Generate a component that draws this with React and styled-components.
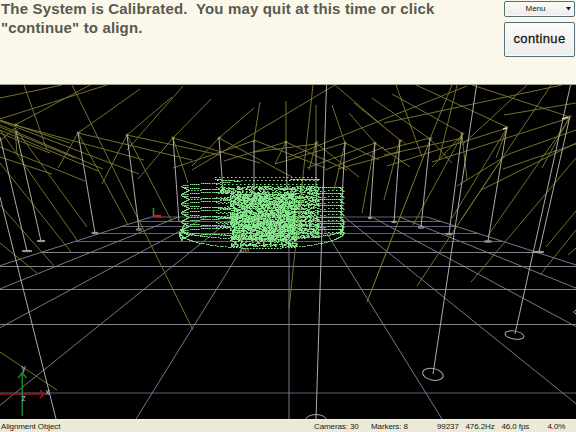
import React from "react";
import styled, { createGlobalStyle } from "styled-components";

const GlobalStyle = createGlobalStyle`
  * { box-sizing: border-box; }
  body { margin: 0; background: #000; font-family: "Liberation Sans", Arial, sans-serif; }
`;

const Window = styled.div`
  display: flex;
  flex-direction: column;
  width: 576px;
  height: 432px;
  overflow: hidden;
`;

const Header = styled.header`
  display: flex;
  justify-content: space-between;
  flex: 0 0 85px;
  background: #fbf8e9;
  border-bottom: 1px solid #a5a499;
`;

const Message = styled.h1`
  margin: -1px 0 0;
  padding-left: 1px;
  font-size: 15px;
  line-height: 19px;
  letter-spacing: 0.16px;
  font-weight: bold;
  color: #595952;
  white-space: pre;
`;

const Actions = styled.div`
  display: flex;
  flex-direction: column;
  gap: 5px;
  width: 72px;
  padding: 1px 1px 0 0;
`;

const Button = styled.button`
  display: flex;
  align-items: center;
  justify-content: center;
  width: 71px;
  height: ${(p) => (p.$large ? 35 : 16)}px;
  padding: ${(p) => (p.$large ? "0 0 2px" : "0")};
  border: 1px solid #54717b;
  border-radius: 2px;
  background: linear-gradient(#fbfbf8, #ececea);
  box-shadow: inset 0 0 0 1px #fafafa;
  color: #181818;
  font-family: inherit;
  font-size: ${(p) => (p.$large ? "13px" : "8px")};
  letter-spacing: ${(p) => (p.$large ? "0.35px" : "0")};
  -webkit-text-stroke: ${(p) => (p.$large ? "0.3px #181818" : "0")};
`;

const MenuLabel = styled.span`
  flex: 1;
  padding: 0 8px 1px 0;
  padding-left: 8px;
  text-align: center;
`;

const Caret = styled.svg`
  width: 5px;
  height: 4px;
  margin-right: 3px;
`;

const Scene = styled.svg`
  display: block;
  flex: 0 0 334px;
  width: 576px;
  background: #000;
`;

const StatusBar = styled.footer`
  display: grid;
  grid-template-columns: 313px 57px 66px 28.5px 36px 46px 1fr;
  align-items: center;
  flex: 0 0 13px;
  height: 13px;
  padding-top: 2px;
  border-top: 1px solid #f7f5ea;
  background: #ece9d8;
  color: #191914;
  font-size: 8px;
  line-height: 10px;
  letter-spacing: -0.1px;
  white-space: nowrap;
`;

const Status = styled.span`
  padding-left: 1px;
`;

const VP = { x: 289, y: 172.5 };
const gridRows = [217, 221.5, 226.5, 233.5, 241.5, 252.5, 266.5, 289.5, 324.5, 393];
const columns = [-5, -4, -3, -2, -1, 0, 1, 2, 3, 4, 5];
const columnX = (k, y) => VP.x + (k * 153 * (y - VP.y)) / 246.5;

// Camera sight lines: x1, y1, x2, y2
const rays = [
  [0, 98, 62, 85], [0, 119, 110, 84], [15, 125, 92, 84], [24, 85, 47, 150],
  [72, 85, 193, 330], [78, 133, 140, 89], [78, 133, 58, 168], [127, 135, 172, 97],
  [127, 150, 183, 86], [127, 135, 102, 184], [127, 135, 172, 222], [127, 135, 192, 149],
  [192, 149, 220, 155], [78, 133, 192, 160], [173, 138, 211, 99], [173, 138, 138, 179],
  [173, 138, 188, 183], [173, 138, 260, 163], [192, 170, 335, 85], [173, 168, 253, 141],
  [0, 120, 70, 143], [0, 121, 144, 160], [0, 121, 139, 174], [0, 125, 103, 169],
  [0, 130, 98, 171], [0, 133, 50, 153], [0, 127, 75, 158], [0, 147, 85, 181],
  [0, 157, 52, 174], [78, 133, 128, 225], [15, 128, 87, 227], [0, 130, 77, 240],
  [0, 163, 71, 252], [0, 205, 55, 267], [0, 243, 37, 273], [0, 352, 57, 390],
  [15, 128, 17, 154], [15, 128, 0, 141],
  [219, 138, 254, 108], [219, 138, 292, 177], [219, 138, 192, 166], [254, 140, 260, 102],
  [254, 140, 325, 168], [224, 161, 286, 142], [286, 142, 286, 101], [286, 142, 275, 164],
  [286, 142, 347, 170], [286, 158, 325, 143], [254, 152, 316, 144], [316, 143, 309, 170],
  [313, 85, 305, 157], [305, 157, 299, 213], [299, 213, 289, 309],
  [332, 105, 345, 143], [345, 143, 334, 190], [345, 143, 379, 160], [316, 143, 316, 105],
  [349, 113, 375, 143], [375, 143, 362, 213], [335, 85, 384, 127], [354, 103, 400, 140],
  [372, 98, 430, 139], [324, 143, 467, 86], [325, 170, 384, 147], [307, 168, 375, 143],
  [359, 177, 316, 143], [338, 169, 400, 152], [275, 164, 345, 143], [375, 143, 410, 167],
  [392, 94, 462, 133], [416, 85, 507, 127], [472, 85, 567, 116], [396, 85, 422, 157],
  [384, 123, 562, 85], [452, 85, 430, 139], [457, 85, 439, 160], [527, 85, 462, 145],
  [551, 85, 417, 286], [504, 115, 576, 103], [569, 118, 542, 168], [570, 118, 487, 237],
  [471, 282, 576, 158], [576, 211, 546, 247], [576, 230, 540, 275], [576, 248, 568, 255],
  [481, 190, 576, 143], [457, 186, 509, 154], [509, 154, 576, 130], [503, 169, 576, 144],
  [384, 155, 463, 138], [432, 162, 569, 118], [387, 166, 507, 128], [462, 135, 467, 180],
  [462, 135, 432, 167], [462, 135, 413, 225], [400, 140, 384, 200], [430, 139, 452, 163],
  [507, 128, 496, 158], [507, 128, 452, 218], [501, 160, 461, 220], [384, 150, 430, 138],
];

// Camera stands: top x, top y, foot x, foot y
const poles = [
  [0, 137, 27, 251], [16, 131, 41, 241], [78, 133, 95, 233], [127, 135, 139, 229],
  [173, 137, 179, 222], [219, 138, 223, 190], [254, 141, 254, 190], [286, 142, 287, 190],
  [316, 143, 316, 190], [345, 143, 341, 218], [375, 143, 370, 218], [400, 140, 394, 222],
  [430, 139, 421, 227], [462, 133, 449, 234], [507, 127, 488, 241], [570, 116, 539, 252],
  [0, 197, 56, 419], [326.5, 85, 316, 419], [476.6, 85, 433, 374], [570.5, 85, 515, 334],
];

const flatFeet = [
  [27, 251, 5], [41, 241, 4], [95, 233, 3.5], [139, 229.5, 3], [370, 218, 2],
  [394, 222, 2.5], [421, 227.5, 3], [449, 234, 3.5], [488, 241.5, 4], [539, 252, 5],
];

const heads = [
  [16, 125], [78, 133], [127, 135], [173, 138], [219, 138], [254, 141], [286, 142],
  [316, 143], [345, 143], [375, 143], [400, 141], [430, 139], [462, 134], [506, 128], [569, 117],
];

// Repeatable noise in 0..1
const noise = (a, b) => {
  const v = Math.sin(a * 12.9898 + b * 78.233) * 43758.5453;
  return v - Math.floor(v);
};

// Wand samples collected during calibration
const buildCloud = () => {
  const dots = [];
  const add = (x, y) => dots.push(`M${Math.round(x)} ${Math.round(y) + 0.5}h1.6`);
  for (let y = 186; y < 247; y += 1) {
    const left = y < 194 ? 221 : 230;
    const right = y < 238 ? 319 : 297;
    for (let x = left; x < right; x += 1) {
      const core = x > 231 && x < 295 && y > 193 && y < 240;
      const side = x > 294 ? 0.48 : 0.38;
      const limit = core ? 0.7 : y % 4 < 2 ? side + 0.12 : side - 0.08;
      if (noise(x, y) < limit) add(x, y);
    }
  }
  for (let r = 0; r < 6; r += 1) {
    const y = 186 + r * 9;
    for (let x = 183; x < 231; x += 2.2) {
      const t = (x - 181) / 50;
      add(x, y - 4 * Math.sqrt(t));
      add(x, y + 4 * Math.sqrt(t));
    }
    for (let x = 188; x < 231; x += 3) add(x, y + 4 - (x - 188) * 0.04);
    for (let i = 0; i < 8; i += 1) {
      add(181 + i, y + i / 2);
      add(188 - i, y + 4 + i / 2);
    }
  }
  for (let y = 187; y < 230; y += 6) {
    for (let x = 318; x < 343; x += 2) {
      add(x, y);
      if (Math.round(x) % 4 < 2) add(x, y + 2.5 + (343 - x) * 0.06);
    }
    for (let i = 0; i < 5; i += 1) add(339 + i, y + i);
  }
  for (let y = 187; y < 230; y += 5) {
    for (let x = 216; x < 231; x += 2) add(x, y + ((x / 2) % 2));
  }
  for (let x = 215; x < 319; x += 4) {
    add(x, 177);
    add(x + 2, 180);
    add(x + 1, 184);
  }
  for (let x = 215; x < 240; x += 1.6) add(x, 179 + (x - 215) * 0.08);
  for (let x = 290; x < 319; x += 1.4) add(x, 179);
  for (let t = 0; t <= Math.PI; t += 0.036) {
    add(261 - 82 * Math.cos(t), 232 + 16 * Math.sin(t));
    add(261 - 81 * Math.cos(t), 229 + 10 * Math.sin(t));
  }
  for (let y = 225; y < 241; y += 1) {
    add(179 + Math.abs(y - 235) * 0.4, y);
    add(343 - Math.abs(y - 229) * 0.3, y - 6);
  }
  return dots.join("");
};
const cloud = buildCloud();

const line = ([x1, y1, x2, y2], i) => <line key={i} x1={x1} y1={y1} x2={x2} y2={y2} />;

function Viewport() {
  return (
    <Scene viewBox="0 85 576 334">
      <g stroke="#85859c" strokeWidth="0.9">
        {gridRows.map((y, i) => (
          <line key={y} x1={columnX(-5, y)} x2={columnX(5, y)} y1={y} y2={y} stroke={i > 4 && i < 9 ? "#91919a" : "#6b6b84"} />
        ))}
        {columns.map((k) => (
          <line key={k} x1={columnX(k, 217)} y1="217" x2={columnX(k, 419)} y2="419" />
        ))}
      </g>
      <g stroke="#77772f" strokeWidth="0.95">{rays.map(line)}</g>
      <line x1="430" y1="140" x2="367" y2="302" stroke="#84842a" />
      <g stroke="#b4b4b2" strokeWidth="0.95">{poles.map(line)}</g>
      <g fill="none" stroke="#aaaaa8" strokeWidth="1">
        {flatFeet.map(([x, y, r]) => <ellipse key={x} cx={x} cy={y} rx={r} ry="0.7" />)}
        <ellipse cx="433" cy="374.3" rx="10.5" ry="5.8" transform="rotate(12 433 374)" />
        <ellipse cx="514.5" cy="335" rx="9.5" ry="4" transform="rotate(9 514 335)" />
        <ellipse cx="316" cy="421" rx="11" ry="6.5" />
        <ellipse cx="581" cy="312" rx="7" ry="2.5" />
      </g>
      {heads.map(([x, y], i) => (
        <g key={x}>
          <path d={`M${x - 1.5} ${y}h3M${x} ${y - 1.5}v3`} stroke="#b1a55a" strokeWidth="0.8" />
          {i % 3 === 1 || i > 10 ? <path d={`M${x + 1} ${y - 1}h1.5`} stroke="#c85230" /> : null}
        </g>
      ))}
      <path d="M384 127l16 13M401 140l5 4" stroke="#8c4020" strokeWidth="0.8" />
      <path d="M562 119l6-2M503 129l4-1" stroke="#e5d6aa" strokeWidth="1.4" />
      <path d={cloud} stroke="#84e68a" strokeWidth="1" />
      <path d="M321.8 235L323.5 180M254 185v20" stroke="#a4b59d" strokeWidth="0.8" />
      <path d="M303 178L297 237" stroke="#809036" strokeWidth="0.8" />
      <path d="M153.5 216v-8" stroke="#16a323" strokeWidth="1.6" />
      <path d="M154 216h7" stroke="#df1718" strokeWidth="2.2" />
      <path d="M154 216l-7 3" stroke="#293cc0" strokeWidth="1.2" />
      <text x="239" y="252" fill="#c2cbc2" fontSize="7" fontFamily="Liberation Sans" opacity="0.95">1m</text>
      <g fill="none" strokeWidth="1.5">
        <path d="M0 394h44M40 390l4 4-4 4" stroke="#a01616" />
        <path d="M22.3 416V373M18 378l4.3-5 4.3 5" stroke="#188a20" />
      </g>
      <g fill="#d0d0d0" fontSize="8.5" fontFamily="Liberation Sans" opacity="0.95">
        <text x="21.5" y="371">y</text>
        <text x="45.5" y="394.5">x</text>
        <text x="21.5" y="401" fill="#c3c3fa">z</text>
      </g>
    </Scene>
  );
}

export default function App() {
  return (
    <Window>
      <GlobalStyle />
      <Header>
        <Message>{"The System is Calibrated.  You may quit at this time or click\n\"continue\" to align."}</Message>
        <Actions>
          <Button>
            <MenuLabel>Menu</MenuLabel>
            <Caret viewBox="0 0 5 4"><path d="M0 0h5L2.5 3.5z" fill="#181818" /></Caret>
          </Button>
          <Button $large>continue</Button>
        </Actions>
      </Header>
      <Viewport />
      <StatusBar>
        <Status>Alignment Object</Status>
        <Status>Cameras: 30</Status>
        <Status>Markers: 8</Status>
        <Status>99237</Status>
        <Status>476.2Hz</Status>
        <Status>46.0 fps</Status>
        <Status>4.0%</Status>
      </StatusBar>
    </Window>
  );
}
